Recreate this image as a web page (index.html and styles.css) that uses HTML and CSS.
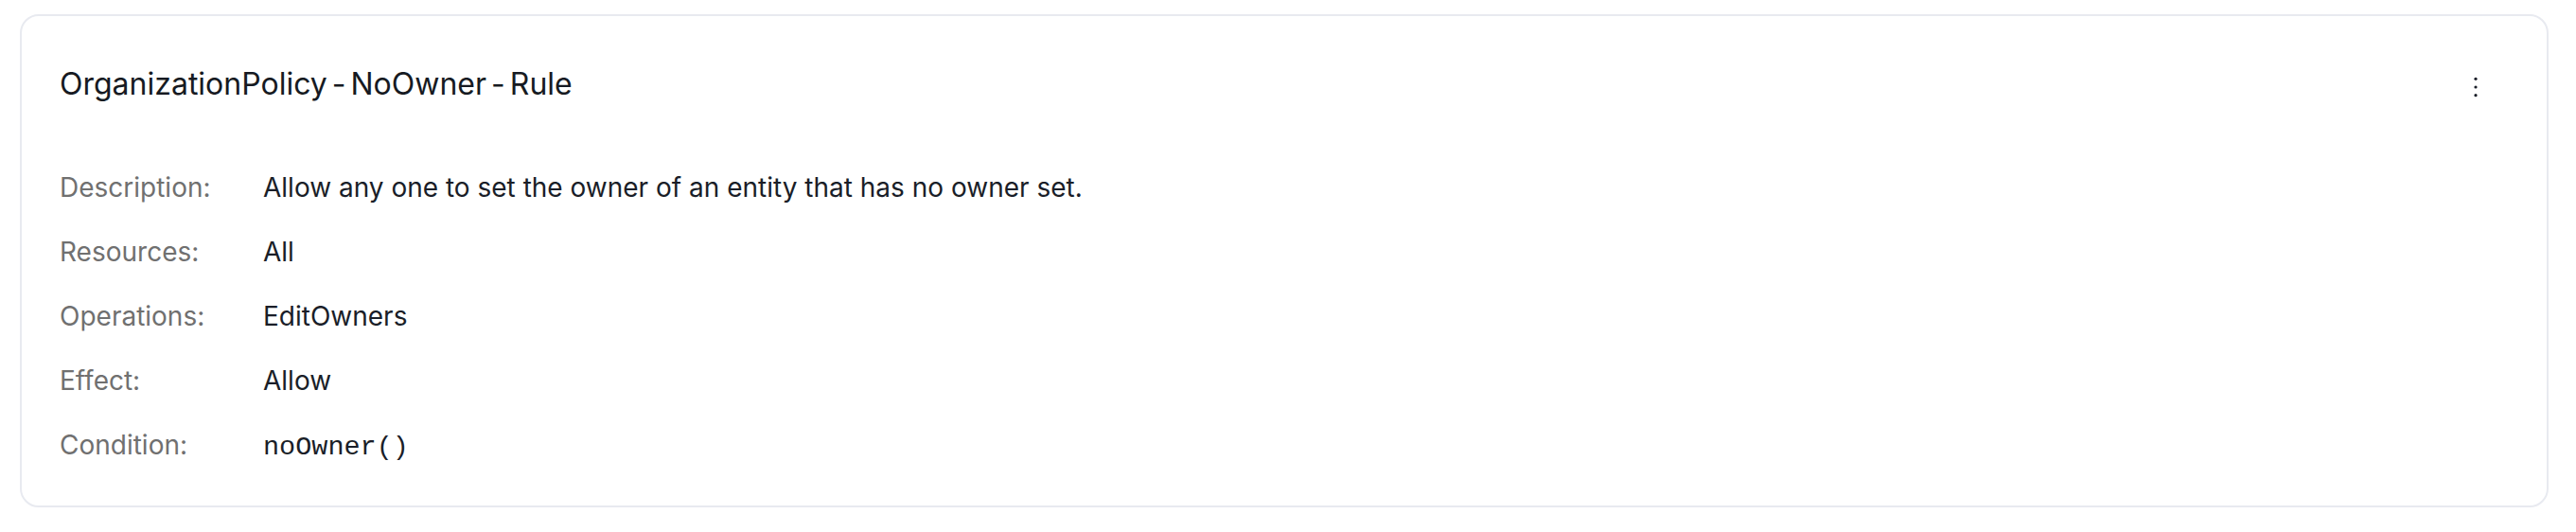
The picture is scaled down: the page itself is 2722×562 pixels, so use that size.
FILE: index.html
```html
<!DOCTYPE html>
<html lang="en">
<head>
<meta charset="utf-8">
<title>Rule</title>
<link rel="stylesheet" href="styles.css">
</head>
<body>
<div class="card">
  <div class="card-header">
    <h2 class="title">OrganizationPolicy<span class="sep">-</span>NoOwner<span class="sep">-</span>Rule</h2>
    <button class="menu-btn" aria-label="More">
      <svg width="40" height="40" viewBox="0 0 40 40"><circle cx="20" cy="14.3" r="1.6"/><circle cx="20" cy="23" r="1.6"/><circle cx="20" cy="31.7" r="1.6"/></svg>
    </button>
  </div>
  <dl class="details">
    <dt>Description:</dt><dd>Allow any one to set the owner of an entity that has no owner set.</dd>
    <dt>Resources:</dt><dd>All</dd>
    <dt>Operations:</dt><dd>EditOwners</dd>
    <dt>Effect:</dt><dd>Allow</dd>
    <dt>Condition:</dt><dd><code class="code">noOwner()</code></dd>
  </dl>
</div>
</body>
</html>
```
FILE: styles.css
```css
html, body { margin: 0; background: #ffffff; }
body {
  padding: 15px 29px 0 21px;
  font-family: Inter, "Noto Sans", sans-serif;
  color: #1a1e28;
}
.card {
  border: 2px solid #e8eaf0;
  border-radius: 20px;
  padding: 52px 40px 41px 40px;
  background: #fff;
}
.card-header {
  display: flex;
  justify-content: space-between;
  align-items: center;
  height: 40px;
}
.title {
  margin: 0;
  font-size: 32px;
  font-weight: 400;
  line-height: 40px;
  color: #161a22;
}
.sep { margin: 0 5px; }
.menu-btn {
  width: 70px;
  height: 40px;
  padding: 0;
  border: 0;
  background: transparent;
  display: flex;
  justify-content: center;
  fill: #1a1e28;
}
.details {
  margin: 69px 0 0 0;
  display: grid;
  grid-template-columns: 215px 1fr;
  row-gap: 28px;
  font-size: 28px;
  line-height: 40px;
}
.details dt { color: #707070; margin: 0; }
.details dd { margin: 0; color: #1a1e28; }
.code {
  font-family: "Liberation Mono", monospace;
  font-size: 28.5px;
}
```
